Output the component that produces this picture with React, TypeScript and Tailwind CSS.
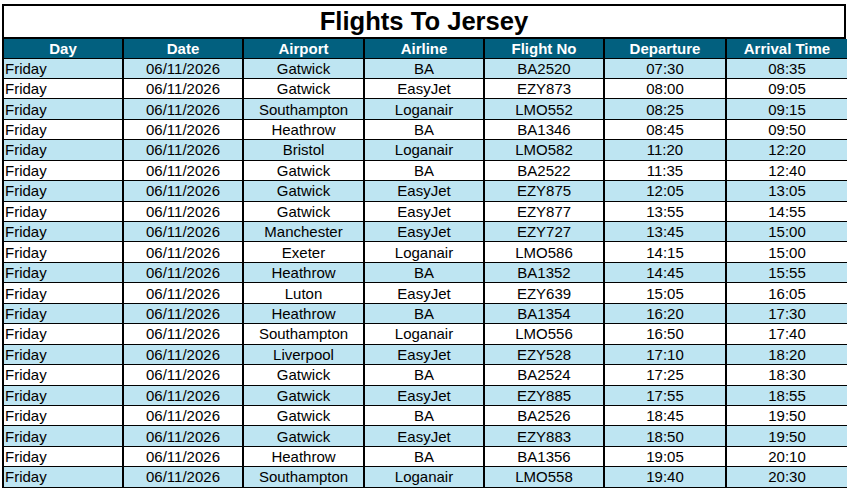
const columns = ['Day', 'Date', 'Airport', 'Airline', 'Flight No', 'Departure', 'Arrival Time']

// cell widths, each one counting its 2px right rule
const widths = ['w-[120px]', 'w-[120px]', 'w-[121px]', 'w-[120px]', 'w-[120px]', 'w-[122px]', 'w-[120px]']

const flights: [string, string, string, string, string][] = [
    ['Gatwick', 'BA', 'BA2520', '07:30', '08:35'],
    ['Gatwick', 'EasyJet', 'EZY873', '08:00', '09:05'],
    ['Southampton', 'Loganair', 'LMO552', '08:25', '09:15'],
    ['Heathrow', 'BA', 'BA1346', '08:45', '09:50'],
    ['Bristol', 'Loganair', 'LMO582', '11:20', '12:20'],
    ['Gatwick', 'BA', 'BA2522', '11:35', '12:40'],
    ['Gatwick', 'EasyJet', 'EZY875', '12:05', '13:05'],
    ['Gatwick', 'EasyJet', 'EZY877', '13:55', '14:55'],
    ['Manchester', 'EasyJet', 'EZY727', '13:45', '15:00'],
    ['Exeter', 'Loganair', 'LMO586', '14:15', '15:00'],
    ['Heathrow', 'BA', 'BA1352', '14:45', '15:55'],
    ['Luton', 'EasyJet', 'EZY639', '15:05', '16:05'],
    ['Heathrow', 'BA', 'BA1354', '16:20', '17:30'],
    ['Southampton', 'Loganair', 'LMO556', '16:50', '17:40'],
    ['Liverpool', 'EasyJet', 'EZY528', '17:10', '18:20'],
    ['Gatwick', 'BA', 'BA2524', '17:25', '18:30'],
    ['Gatwick', 'EasyJet', 'EZY885', '17:55', '18:55'],
    ['Gatwick', 'BA', 'BA2526', '18:45', '19:50'],
    ['Gatwick', 'EasyJet', 'EZY883', '18:50', '19:50'],
    ['Heathrow', 'BA', 'BA1356', '19:05', '20:10'],
    ['Southampton', 'Loganair', 'LMO558', '19:40', '20:30'],
]

export default function App() {
    return (
        <div className="w-[847px] h-[490px] overflow-hidden bg-white pt-1 pl-[2px] font-['Liberation_Sans',Arial,sans-serif] text-black">
            <div className="w-[844px] h-[35px] border-2 border-black flex items-center justify-center">
                <h1 className="text-[25.6px] font-bold leading-none">Flights To Jersey</h1>
            </div>

            <div className="w-[845px] border-l-2 border-black">
                <div className="flex h-[19.5px] bg-[#02607f] border-b border-black">
                    {columns.map((col, i) => (
                        <div
                            key={col}
                            className={`${widths[i]} shrink-0 flex items-center justify-center text-[15px] font-bold text-white leading-none ${i < 6 ? 'border-r-2 border-black' : ''}`}
                        >
                            {col}
                        </div>
                    ))}
                </div>

                {flights.map((f, r) => {
                    const cells = ['Friday', '06/11/2026', ...f]
                    return (
                        <div
                            key={r}
                            className={`flex h-[20.45px] border-b border-black ${r % 2 === 0 ? 'bg-[#bee5f2]' : 'bg-white'}`}
                        >
                            {cells.map((c, i) => (
                                <div
                                    key={i}
                                    className={`${widths[i]} shrink-0 flex items-center text-[15px] leading-none ${i === 0 ? 'justify-start pl-px' : 'justify-center'} ${i < 6 ? 'border-r-2 border-black' : ''}`}
                                >
                                    {c}
                                </div>
                            ))}
                        </div>
                    )
                })}
            </div>
        </div>
    )
}
